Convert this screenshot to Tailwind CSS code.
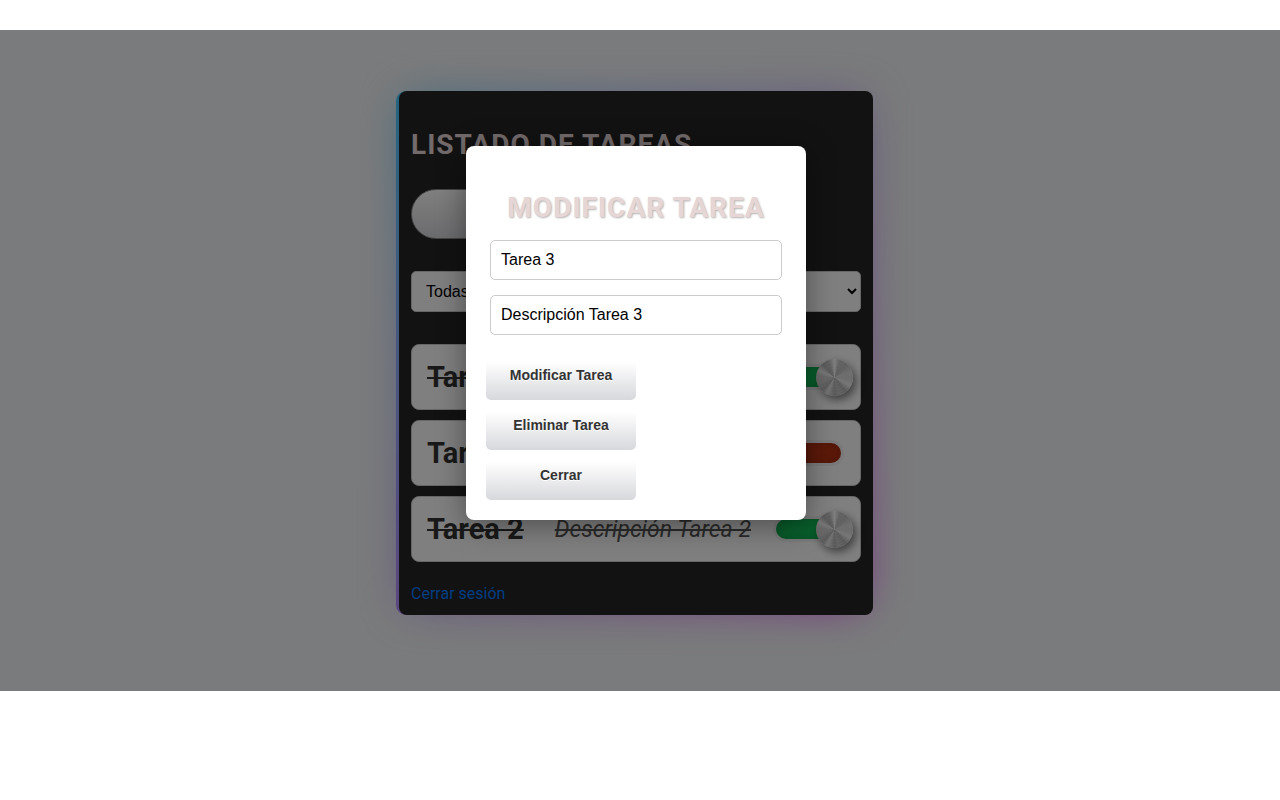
<!DOCTYPE html>
<html lang="es">
<head>
<meta charset="utf-8">
<meta name="viewport" content="width=device-width, initial-scale=1">
<title>Listado de tareas</title>
<script src="https://cdn.jsdelivr.net/npm/@tailwindcss/browser@4"></script>
<style>
  .knob-switch::before {
    background: repeating-radial-gradient(circle, rgb(255 255 255 / .1) 0 1px, transparent 1px 3px),
      conic-gradient(#fff 0deg, #c4c4c4 18deg, #c0c0c0 45deg, #dcdcdc 70deg, #d8d8d8 95deg, #eee 118deg, #b4b4b4 140deg, #c4c4c4 165deg, #b4b4b4 180deg, #e8e8e8 206deg, #b4b4b4 222deg, #ccc 250deg, #d0d0d0 275deg, #f0f0f0 296deg, #b4b4b4 318deg, #c0c0c0 340deg, #fff 360deg);
  }
</style>
</head>
<body class="bg-white font-[Roboto,sans-serif] text-base text-[#333]">
<main class="relative mt-[30px] flex justify-center bg-[#f4f6f8] pt-[61px] pr-[11px] pb-[76px]">
  <div class="relative w-full max-w-[477px]">
    <div class="absolute inset-3 bg-linear-to-tl from-[#e81cff] to-[#40c9ff] blur-[22px]"></div>
    <div class="relative rounded-[10px] bg-linear-to-tl from-[#e81cff] to-[#40c9ff] pl-[3px]">
      <section class="rounded-[8px] bg-[#242424] px-3 pt-9 pb-[9px]">
        <h1 class="text-[28px] leading-[35px] font-bold tracking-[1px] text-[#e6d6d6]">LISTADO DE TAREAS</h1>
        <button type="button" aria-label="Agregar tarea" class="mt-[27px] block h-[50px] w-[200px] rounded-full border border-[#888] bg-linear-to-b from-white to-[#d7d8dc]"></button>
        <select aria-label="Filtrar tareas" class="mt-8 block h-[41px] w-full rounded-[5px] border border-[#ccc] bg-white px-[10px] font-['Liberation_Sans',sans-serif] text-black">
          <option>Todas</option>
          <option>Completadas</option>
          <option>Pendientes</option>
        </select>
        <ul class="mt-8 flex flex-col gap-[10px]">
          <li class="flex h-[66px] items-center rounded-[8px] border border-[#ccc] bg-white px-[15px]">
            <h2 class="pt-px text-[29px] font-bold line-through">Tarea 1</h2>
            <p class="ml-[31px] grow pt-0.5 text-[23px] text-[#555] italic line-through">Descripción Tarea 1</p>
            <input type="checkbox" checked aria-label="Tarea 1 completada" class="knob-switch relative mr-1 h-5 w-[65px] shrink-0 appearance-none rounded-full bg-[#b83212] shadow-[inset_0_0_8px_rgb(0_0_0/.15),0_0_0_3px_rgb(0_0_0/.05)] before:absolute before:-top-2 before:-left-3 before:size-[37px] before:rounded-full before:shadow-[3px_4px_8px_rgb(0_0_0/.5)] checked:bg-[#12bd58] checked:before:left-10">
          </li>
          <li class="flex h-[66px] items-center rounded-[8px] border border-[#ccc] bg-white px-[15px]">
            <h2 class="pt-px text-[29px] font-bold">Tarea 3</h2>
            <p class="ml-[31px] grow pt-0.5 text-[23px] text-[#555] italic">Descripción Tarea 3</p>
            <input type="checkbox" aria-label="Tarea 3 completada" class="knob-switch relative mr-1 h-5 w-[65px] shrink-0 appearance-none rounded-full bg-[#b83212] shadow-[inset_0_0_8px_rgb(0_0_0/.15),0_0_0_3px_rgb(0_0_0/.05)] before:absolute before:-top-2 before:-left-3 before:size-[37px] before:rounded-full before:shadow-[3px_4px_8px_rgb(0_0_0/.5)] checked:bg-[#12bd58] checked:before:left-10">
          </li>
          <li class="flex h-[66px] items-center rounded-[8px] border border-[#ccc] bg-white px-[15px]">
            <h2 class="pt-px text-[29px] font-bold line-through">Tarea 2</h2>
            <p class="ml-[31px] grow pt-0.5 text-[23px] text-[#555] italic line-through">Descripción Tarea 2</p>
            <input type="checkbox" checked aria-label="Tarea 2 completada" class="knob-switch relative mr-1 h-5 w-[65px] shrink-0 appearance-none rounded-full bg-[#b83212] shadow-[inset_0_0_8px_rgb(0_0_0/.15),0_0_0_3px_rgb(0_0_0/.05)] before:absolute before:-top-2 before:-left-3 before:size-[37px] before:rounded-full before:shadow-[3px_4px_8px_rgb(0_0_0/.5)] checked:bg-[#12bd58] checked:before:left-10">
          </li>
        </ul>
        <a href="#" class="mt-5 inline-block leading-6 text-[#007bff]">Cerrar sesión</a>
      </section>
    </div>
    <div role="dialog" aria-labelledby="modal-title" class="absolute top-[55px] left-[70px] z-20 w-[340px] rounded-[8px] bg-white p-5 shadow-[0_5px_30px_rgb(0_0_0/.4)]">
      <h2 id="modal-title" class="mt-6 text-center text-[28px] leading-[35px] font-bold tracking-[1px] text-[#e6d6d6] [text-shadow:1px_1px_2px_rgb(0_0_0/.3)]">MODIFICAR TAREA</h2>
      <div class="mt-[15px] flex flex-col gap-[15px] px-1 font-['Liberation_Sans',sans-serif] text-black">
        <input type="text" aria-label="Nombre de la tarea" value="Tarea 3" class="h-10 w-full rounded-[5px] border border-[#ccc] px-[10px]">
        <input type="text" aria-label="Descripción de la tarea" value="Descripción Tarea 3" class="h-10 w-full rounded-[5px] border border-[#ccc] px-[10px]">
      </div>
      <div class="mt-[25px] flex flex-col gap-[10px] font-['Liberation_Sans',sans-serif] text-[14px] font-bold">
        <button type="button" class="h-10 w-[150px] rounded-[5px] bg-linear-to-b from-white from-5% to-[#d7d8dc] pb-[10px] [text-shadow:0_1px_0_#fff]">Modificar Tarea</button>
        <button type="button" class="h-10 w-[150px] rounded-[5px] bg-linear-to-b from-white from-5% to-[#d7d8dc] pb-[10px] [text-shadow:0_1px_0_#fff]">Eliminar Tarea</button>
        <button type="button" class="h-10 w-[150px] rounded-[5px] bg-linear-to-b from-white from-5% to-[#d7d8dc] pb-[10px] [text-shadow:0_1px_0_#fff]">Cerrar</button>
      </div>
    </div>
  </div>
  <div class="absolute inset-0 z-10 bg-black/50"></div>
</main>
</body>
</html>
